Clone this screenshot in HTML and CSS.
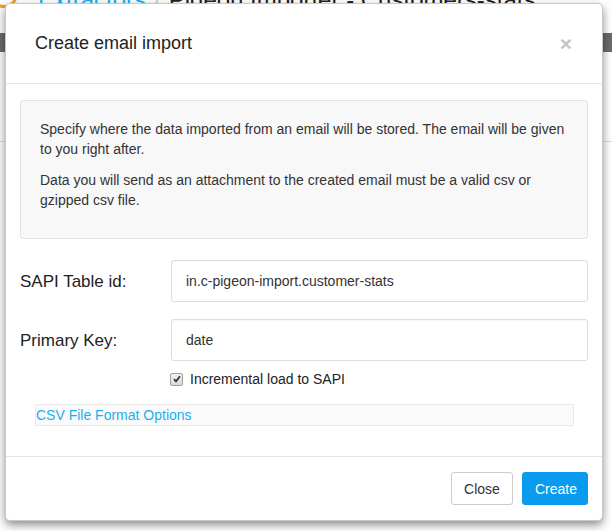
FILE: index.html
```html
<!DOCTYPE html>
<html>
<head>
<meta charset="utf-8">
<link rel="stylesheet" href="styles.css">
</head>
<body>
<div class="page">
  <div class="crumbs">
    <span class="logo"></span>
    <span class="crumb-link">Extractors</span>
    <span class="crumb-sep">/</span>
    <span class="crumb-title">Pigeon Importer - Customers-stats</span>
  </div>
  <div class="page-bar"></div>
  <div class="page-line"></div>
</div>

<div class="modal">
  <div class="modal-header">
    <h4 class="modal-title">Create email import</h4>
    <span class="close-x">×</span>
  </div>
  <div class="modal-body">
    <div class="well">
      <p>Specify where the data imported from an email will be stored. The email will be given to you right after.</p>
      <p>Data you will send as an attachment to the created email must be a valid csv or gzipped csv file.</p>
    </div>
    <div class="form-row">
      <label class="form-label">SAPI Table id:</label>
      <div class="form-input">in.c-pigeon-import.customer-stats</div>
    </div>
    <div class="form-row">
      <label class="form-label">Primary Key:</label>
      <div class="form-input">date</div>
    </div>
    <div class="check-row">
      <span class="checkbox">
        <svg width="8" height="8" viewBox="0 0 8 8"><path d="M1 4.2 L3 6.3 L7 1.2" fill="none" stroke="#333" stroke-width="1.8"/></svg>
      </span>
      <span class="check-label">Incremental load to SAPI</span>
    </div>
    <div class="csv-panel"><span class="csv-link">CSV File Format Options</span></div>
  </div>
  <div class="modal-footer">
    <button class="btn btn-default">Close</button>
    <button class="btn btn-primary">Create</button>
  </div>
</div>
</body>
</html>
```
FILE: styles.css
```css
html, body {
  margin: 0;
  padding: 0;
  background: #fff;
  font-family: "Liberation Sans", Arial, sans-serif;
  color: #333;
  overflow: hidden;
  width: 612px;
  height: 531px;
}

.page {
  position: relative;
  width: 612px;
  height: 531px;
  background: #fff;
}

.crumbs {
  position: absolute;
  top: -20px;
  left: 0;
  display: flex;
  align-items: baseline;
  gap: 8px;
  font-size: 24px;
  white-space: nowrap;
}

.logo {
  display: inline-block;
  width: 22px;
  height: 22px;
  border: 3px solid #f0a030;
  border-radius: 50%;
  margin-left: -10px;
}

.crumb-link { color: #1ab0f0; margin-left: 12px; }
.crumb-sep { color: #ccc; }
.crumb-title { color: #222; }

.page-bar {
  position: absolute;
  top: 33px;
  left: 0;
  width: 612px;
  height: 19px;
  background: #6b6b6b;
}

.page-line {
  position: absolute;
  top: 141px;
  left: 0;
  width: 612px;
  height: 1px;
  background: #ddd;
}

.modal {
  position: absolute;
  top: 3px;
  left: 5px;
  width: 596px;
  border: 1px solid #c8c8c8;
  border-radius: 5px;
  background: #fff;
  box-shadow: 0 4px 10px rgba(0, 0, 0, 0.45);
}

.modal-header {
  height: 79px;
  border-bottom: 1px solid #e5e5e5;
  display: flex;
  align-items: center;
  justify-content: space-between;
  padding: 0 30px 0 29px;
}

.modal-title {
  margin: 0;
  font-size: 18px;
  font-weight: normal;
  color: #222;
}

.close-x {
  font-size: 21px;
  font-weight: bold;
  color: #c4c4c4;
  line-height: 1;
}

.modal-body {
  padding: 16px 14px 30px 14px;
}

.well {
  background: #f8f8f8;
  border: 1px solid #e3e3e3;
  border-radius: 3px;
  padding: 19px 19px 16px 19px;
  margin-bottom: 21px;
  font-size: 14px;
  line-height: 19.5px;
  color: #333;
}

.well p {
  margin: 0 0 12px 0;
}

.form-row {
  display: grid;
  grid-template-columns: 151px 1fr;
  align-items: center;
  margin-bottom: 17px;
}

.form-label {
  font-size: 17px;
  color: #222;
  padding-top: 1px;
}

.form-input {
  height: 40px;
  border: 1px solid #dcdcdc;
  border-radius: 3px;
  padding: 0 14px;
  display: flex;
  align-items: center;
  font-size: 14px;
  color: #333;
  box-shadow: inset 0 1px 1px rgba(0, 0, 0, 0.03);
}

.check-row {
  display: flex;
  align-items: center;
  margin-top: -9px;
  padding-left: 150px;
  height: 20px;
}

.checkbox {
  width: 11px;
  height: 11px;
  border: 1px solid #a0a0a0;
  border-radius: 2px;
  background: linear-gradient(#f4f4f4, #d8d8d8);
  display: flex;
  align-items: center;
  justify-content: center;
  margin-right: 7px;
}

.check-label {
  font-size: 14px;
  color: #222;
}

.csv-panel {
  margin: 15px 14px 0 15px;
  height: 20px;
  border: 1px solid #e8e8e8;
  border-radius: 2px;
  background: #fafafa;
  display: flex;
  align-items: center;
}

.csv-link {
  font-size: 14px;
  color: #1ab0f0;
}

.modal-footer {
  border-top: 1px solid #e5e5e5;
  padding: 15px 14px 15px 0;
  display: flex;
  justify-content: flex-end;
  gap: 9px;
}

.btn {
  height: 33px;
  border-radius: 3px;
  font-family: "Liberation Sans", Arial, sans-serif;
  font-size: 14px;
  padding: 0 12px;
  cursor: pointer;
}

.btn-default {
  background: #fff;
  border: 1px solid #ccc;
  color: #333;
  width: 62px;
}

.btn-primary {
  background: #0a9bef;
  border: 1px solid #0a9bef;
  color: #fff;
  width: 66px;
}
```
